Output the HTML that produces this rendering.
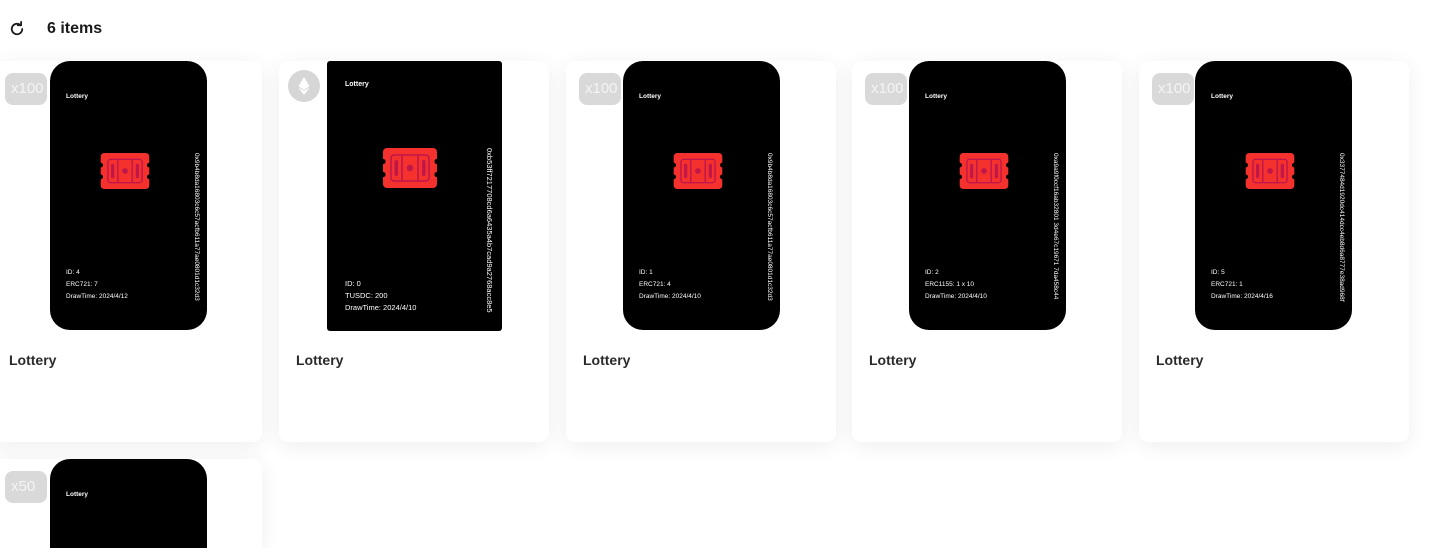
<!DOCTYPE html>
<html style="width:1431px;height:548px;overflow:hidden"><head><meta charset="utf-8"><style>
*{margin:0;padding:0;box-sizing:border-box}
body{width:1431px;height:548px;overflow:hidden;background:#fff;font-family:"Liberation Sans",sans-serif;position:relative}
.hdr{position:absolute;left:8px;top:19px;height:20px;display:flex;align-items:center}
.hdr span{position:absolute;left:39px;top:0;font-size:16px;font-weight:bold;color:#1a1a1a;white-space:nowrap;line-height:20px}
.card{position:absolute;width:270px;height:381px;background:#fff;border-radius:9px;box-shadow:0 4px 22px rgba(0,0,0,0.07);overflow:hidden}
.title{position:absolute;left:17px;top:291px;font-size:14px;font-weight:bold;color:#2a2a2a}
.badge{position:absolute;left:13px;top:12px;width:42px;height:32px;border-radius:8px;background:#d9d9d9;color:#f4f4f4;font-size:15px;line-height:32px;padding-left:6px}
.eth{position:absolute;left:9px;top:9px;width:32px;height:32px;border-radius:50%;background:#d6d6d6}
.img{position:absolute;top:0;background:#000;color:#fff;overflow:hidden}
.img .lt{position:absolute;font-size:6.5px;font-weight:bold}
.img .info{position:absolute;font-size:6.5px;line-height:12px}
.img .addr{position:absolute;font-size:6.5px;writing-mode:vertical-rl;white-space:nowrap}
.img svg{position:absolute}
</style></head><body>
<div class="hdr">
<svg width="18" height="18" viewBox="0 0 24 24" fill="none" stroke="#1a1a1a" stroke-width="2.4" stroke-linecap="round"><path d="M19 12a7 7 0 1 1-2.1-5"/><path d="M17.5 2.5v4.5h-4.5" stroke-linejoin="round"/></svg>
<span>6 items</span></div>

<div class="card" style="left:-8px;top:61px">
<div class="badge">x100</div>
<div class="img" style="left:58px;width:157px;height:269px;border-radius:20px">
<div class="lt" style="left:16px;top:32px">Lottery</div>
<svg style="left:48px;top:92px" width="54" height="36" viewBox="0 0 60 40"><rect x="3" y="0" width="54" height="40" rx="4" fill="#f5312d"/><circle cx="3" cy="13.5" r="2.6" fill="#000"/><circle cx="3" cy="26.5" r="2.6" fill="#000"/><circle cx="57" cy="13.5" r="2.6" fill="#000"/><circle cx="57" cy="26.5" r="2.6" fill="#000"/><rect x="11" y="7" width="38" height="26" rx="3" fill="none" stroke="#c0174a" stroke-width="1.6"/><path d="M22 7V33M38 7V33" stroke="#c0174a" stroke-width="1.6"/><rect x="14.5" y="12" width="3.5" height="16" rx="1.7" fill="#c0174a"/><rect x="42" y="12" width="3.5" height="16" rx="1.7" fill="#c0174a"/><circle cx="30" cy="20" r="3.2" fill="#c0174a"/></svg>
<div class="info" style="left:16px;top:206px">ID: 4<br>ERC721: 7<br>DrawTime: 2024/4/12</div>
<div class="addr" style="left:143px;top:92px">0x9b4b8da16803c6c57acfb611a77ae0801d1c32d3</div>
</div>
<div class="title">Lottery</div></div>

<div class="card" style="left:279px;top:61px">
<div class="eth"><svg width="32" height="32" viewBox="0 0 32 32"><path d="M16 7L10.5 16.3 16 19.5 21.5 16.3Z" fill="#fff"/><path d="M16 20.6L10.5 17.4 16 25 21.5 17.4Z" fill="#fff"/></svg></div>
<div class="img" style="left:48px;width:175px;height:270px;border-radius:3px">
<div class="lt" style="left:18px;top:20px;font-size:7px">Lottery</div>
<svg style="left:53px;top:87px" width="60" height="40" viewBox="0 0 60 40"><rect x="3" y="0" width="54" height="40" rx="4" fill="#f5312d"/><circle cx="3" cy="13.5" r="2.6" fill="#000"/><circle cx="3" cy="26.5" r="2.6" fill="#000"/><circle cx="57" cy="13.5" r="2.6" fill="#000"/><circle cx="57" cy="26.5" r="2.6" fill="#000"/><rect x="11" y="7" width="38" height="26" rx="3" fill="none" stroke="#c0174a" stroke-width="1.6"/><path d="M22 7V33M38 7V33" stroke="#c0174a" stroke-width="1.6"/><rect x="14.5" y="12" width="3.5" height="16" rx="1.7" fill="#c0174a"/><rect x="42" y="12" width="3.5" height="16" rx="1.7" fill="#c0174a"/><circle cx="30" cy="20" r="3.2" fill="#c0174a"/></svg>
<div class="info" style="left:18px;top:217px;font-size:7.5px">ID: 0<br>TUSDC: 200<br>DrawTime: 2024/4/10</div>
<div class="addr" style="left:158px;top:87px;font-size:7.5px">0xb53ff7217708cd6a6435a4b7cad9a2768acc8e5</div>
</div>
<div class="title">Lottery</div></div>

<div class="card" style="left:566px;top:61px">
<div class="badge">x100</div>
<div class="img" style="left:57px;width:157px;height:269px;border-radius:20px">
<div class="lt" style="left:16px;top:32px">Lottery</div>
<svg style="left:48px;top:92px" width="54" height="36" viewBox="0 0 60 40"><rect x="3" y="0" width="54" height="40" rx="4" fill="#f5312d"/><circle cx="3" cy="13.5" r="2.6" fill="#000"/><circle cx="3" cy="26.5" r="2.6" fill="#000"/><circle cx="57" cy="13.5" r="2.6" fill="#000"/><circle cx="57" cy="26.5" r="2.6" fill="#000"/><rect x="11" y="7" width="38" height="26" rx="3" fill="none" stroke="#c0174a" stroke-width="1.6"/><path d="M22 7V33M38 7V33" stroke="#c0174a" stroke-width="1.6"/><rect x="14.5" y="12" width="3.5" height="16" rx="1.7" fill="#c0174a"/><rect x="42" y="12" width="3.5" height="16" rx="1.7" fill="#c0174a"/><circle cx="30" cy="20" r="3.2" fill="#c0174a"/></svg>
<div class="info" style="left:16px;top:206px">ID: 1<br>ERC721: 4<br>DrawTime: 2024/4/10</div>
<div class="addr" style="left:143px;top:92px">0x9b4b8da16803c6c57acfb611a77ae0801d1c32d3</div>
</div>
<div class="title">Lottery</div></div>

<div class="card" style="left:852px;top:61px">
<div class="badge">x100</div>
<div class="img" style="left:57px;width:157px;height:269px;border-radius:20px">
<div class="lt" style="left:16px;top:32px">Lottery</div>
<svg style="left:48px;top:92px" width="54" height="36" viewBox="0 0 60 40"><rect x="3" y="0" width="54" height="40" rx="4" fill="#f5312d"/><circle cx="3" cy="13.5" r="2.6" fill="#000"/><circle cx="3" cy="26.5" r="2.6" fill="#000"/><circle cx="57" cy="13.5" r="2.6" fill="#000"/><circle cx="57" cy="26.5" r="2.6" fill="#000"/><rect x="11" y="7" width="38" height="26" rx="3" fill="none" stroke="#c0174a" stroke-width="1.6"/><path d="M22 7V33M38 7V33" stroke="#c0174a" stroke-width="1.6"/><rect x="14.5" y="12" width="3.5" height="16" rx="1.7" fill="#c0174a"/><rect x="42" y="12" width="3.5" height="16" rx="1.7" fill="#c0174a"/><circle cx="30" cy="20" r="3.2" fill="#c0174a"/></svg>
<div class="info" style="left:16px;top:206px">ID: 2<br>ERC1155: 1 x 10<br>DrawTime: 2024/4/10</div>
<div class="addr" style="left:143px;top:92px">0xa9a9f0ccf16ab32801 3d4e67c19671 7da458c44</div>
</div>
<div class="title">Lottery</div></div>

<div class="card" style="left:1139px;top:61px">
<div class="badge">x100</div>
<div class="img" style="left:56px;width:157px;height:269px;border-radius:20px">
<div class="lt" style="left:16px;top:32px">Lottery</div>
<svg style="left:48px;top:92px" width="54" height="36" viewBox="0 0 60 40"><rect x="3" y="0" width="54" height="40" rx="4" fill="#f5312d"/><circle cx="3" cy="13.5" r="2.6" fill="#000"/><circle cx="3" cy="26.5" r="2.6" fill="#000"/><circle cx="57" cy="13.5" r="2.6" fill="#000"/><circle cx="57" cy="26.5" r="2.6" fill="#000"/><rect x="11" y="7" width="38" height="26" rx="3" fill="none" stroke="#c0174a" stroke-width="1.6"/><path d="M22 7V33M38 7V33" stroke="#c0174a" stroke-width="1.6"/><rect x="14.5" y="12" width="3.5" height="16" rx="1.7" fill="#c0174a"/><rect x="42" y="12" width="3.5" height="16" rx="1.7" fill="#c0174a"/><circle cx="30" cy="20" r="3.2" fill="#c0174a"/></svg>
<div class="info" style="left:16px;top:206px">ID: 5<br>ERC721: 1<br>DrawTime: 2024/4/16</div>
<div class="addr" style="left:143px;top:92px">0x3377484d1920dc414dcc4eb8d6a8777e38ad968f</div>
</div>
<div class="title">Lottery</div></div>

<div class="card" style="left:-8px;top:459px;height:89px;border-radius:9px 9px 0 0">
<div class="badge">x50</div>
<div class="img" style="left:58px;width:157px;height:89px;border-radius:20px 20px 0 0">
<div class="lt" style="left:16px;top:32px">Lottery</div>
</div></div>
</body></html>
